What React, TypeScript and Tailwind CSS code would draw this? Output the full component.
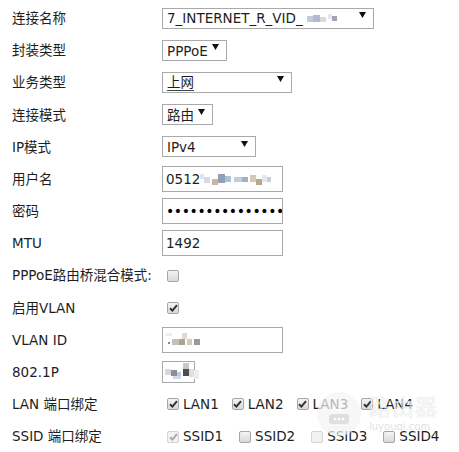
import React from 'react';

// Router WAN connection settings form (static snapshot)

const FONT = "font-['DejaVu_Sans','Noto_Sans_CJK_SC',sans-serif]";

const Arrow = () => (
  <svg width="7" height="6" viewBox="0 0 7 6" className="shrink-0 -mt-[6px]">
    <path d="M0 0 L7 0 L3.5 6 Z" fill="#111" />
  </svg>
);

interface SelectProps {
  width: string;
  children: React.ReactNode;
}

const FakeSelect: React.FC<SelectProps> = ({ width, children }) => (
  <div className={`${width} h-[21px] border border-[#a9a9a9] bg-white flex items-center justify-between pl-[4px] pr-[7px] overflow-hidden`}>
    <div className="flex items-center whitespace-nowrap pt-[2px] leading-none">{children}</div>
    <Arrow />
  </div>
);

const TextBox: React.FC<{ width?: string; height?: string; children?: React.ReactNode }> = ({ width = 'w-[121px]', height = 'h-[26px]', children }) => (
  <div className={`${width} ${height} border border-[#a9a9a9] bg-white flex items-center pl-[3px] overflow-hidden whitespace-nowrap`}>
    {children}
  </div>
);

// censored area: small pixel blocks
const Pixels: React.FC<{ w: number; h: number; cells: [number, number, number, number, string][] }> = ({ w, h, cells }) => (
  <svg width={w} height={h} viewBox={`0 0 ${w} ${h}`} className="shrink-0">
    {cells.map(([x, y, cw, ch, c], i) => (
      <rect key={i} x={x} y={y} width={cw} height={ch} fill={c} />
    ))}
  </svg>
);

const Check: React.FC<{ checked?: boolean; disabled?: boolean }> = ({ checked, disabled }) => (
  <div
    className={`w-[12px] h-[12px] ml-[5px] shrink-0 rounded-[2px] border flex items-center justify-center ${
      disabled ? 'border-[#d4d4d4] bg-[#f2f2f2]' : 'border-[#a6a6a6] bg-gradient-to-b from-[#f4f4f4] to-[#d9d9d9]'
    }`}
  >
    {checked && (
      <svg width="9" height="8" viewBox="0 0 9 8">
        <path d="M1 4.2 L3.4 6.6 L8 1.2" fill="none" stroke={disabled ? '#a8a8a8' : '#333'} strokeWidth="2" />
      </svg>
    )}
  </div>
);

const Row: React.FC<{ label: string; children: React.ReactNode }> = ({ label, children }) => (
  <div className="h-[32.2px] flex items-center">
    <div className="w-[150px] shrink-0 whitespace-nowrap">{label}</div>
    <div className="flex items-center">{children}</div>
  </div>
);

const Opt: React.FC<{ checked?: boolean; disabled?: boolean; label: string; gap: string }> = ({ checked, disabled, label, gap }) => (
  <div className={`flex items-center ${gap}`}>
    <Check checked={checked} disabled={disabled} />
    <span className="ml-[4px]">{label}</span>
  </div>
);

export default function App() {
  return (
    <div className={`relative w-[459px] h-[452px] overflow-hidden bg-white text-[#1e1e1e] text-[13.5px] pl-[12px] pt-[2px] ${FONT}`}>
      <Row label="连接名称">
        <FakeSelect width="w-[212px]">
          <span>7_INTERNET_R_VID_</span>
          <Pixels w={34} h={12} cells={[[4, 3, 6, 6, '#c6c9d8'], [10, 2, 7, 7, '#b3b8cc'], [17, 4, 6, 5, '#d8dae4'], [25, 1, 4, 5, '#e6e6ee'], [29, 3, 5, 5, '#9ea3b6']]} />
        </FakeSelect>
      </Row>
      <Row label="封装类型">
        <FakeSelect width="w-[65px]">PPPoE</FakeSelect>
      </Row>
      <Row label="业务类型">
        <FakeSelect width="w-[130px]">
          <span className="border-b border-[#444] leading-[15px]">上网</span>
        </FakeSelect>
      </Row>
      <Row label="连接模式">
        <FakeSelect width="w-[51px]">路由</FakeSelect>
      </Row>
      <Row label="IP模式">
        <FakeSelect width="w-[94px]">IPv4</FakeSelect>
      </Row>
      <Row label="用户名">
        <TextBox>
          <span>0512</span>
          <Pixels w={75} h={16} cells={[[0, 3, 4, 5, '#e0e4ec'], [4, 6, 6, 6, '#d5dbe6'], [12, 8, 6, 6, '#c8b8a2'], [18, 3, 7, 9, '#8fa0b8'], [25, 5, 6, 6, '#b2c0d4'], [34, 6, 8, 5, '#c0cce0'], [42, 6, 6, 5, '#9fb0c8'], [50, 4, 6, 7, '#d8c8b0'], [56, 8, 6, 6, '#b8a890'], [62, 4, 5, 7, '#e4e8f0'], [67, 6, 4, 5, '#c9ced8']]} />
        </TextBox>
      </Row>
      <Row label="密码">
        <TextBox>
          <span className="tracking-[-0.4px] text-[14px] leading-none text-black">••••••••••••••••••</span>
        </TextBox>
      </Row>
      <Row label="MTU">
        <TextBox>
          <span>1492</span>
        </TextBox>
      </Row>
      <Row label="PPPoE路由桥混合模式:">
        <Check />
      </Row>
      <Row label="启用VLAN">
        <Check checked />
      </Row>
      <Row label="VLAN ID">
        <TextBox>
          <Pixels w={40} h={16} cells={[[2, 10, 2, 2, '#8a8a8a'], [6, 7, 7, 6, '#c5c0b6'], [13, 7, 6, 6, '#a8a49c'], [16, 1, 5, 6, '#e2d8cc'], [21, 7, 5, 6, '#d6cabc'], [28, 7, 6, 6, '#9a9a9a'], [0, 1, 6, 3, '#eeeeee']]} />
        </TextBox>
      </Row>
      <Row label="802.1P">
        <div className="relative">
          <TextBox width="w-[33px]" height="h-[22px]">
            <span />
          </TextBox>
          <div className="absolute left-[1px] top-[1px]">
            <Pixels w={38} h={20} cells={[[2, 7, 6, 6, '#d8d8dc'], [8, 8, 6, 6, '#8e8e92'], [14, 10, 4, 5, '#c4cad8'], [20, 1, 6, 7, '#c8c8c8'], [20, 7, 6, 7, '#4e4e4e'], [26, 7, 5, 8, '#e0e0e0'], [31, 8, 5, 9, '#ededed'], [10, 14, 8, 3, '#cfdcef']]} />
          </div>
        </div>
      </Row>
      <Row label="LAN 端口绑定">
        <Opt checked label="LAN1" gap="mr-[8px]" />
        <Opt checked label="LAN2" gap="mr-[8px]" />
        <Opt checked label="LAN3" gap="mr-[8px]" />
        <Opt checked label="LAN4" gap="" />
      </Row>
      <Row label="SSID 端口绑定">
        <Opt checked disabled label="SSID1" gap="mr-[11px]" />
        <Opt label="SSID2" gap="mr-[11px]" />
        <Opt disabled label="SSID3" gap="mr-[11px]" />
        <Opt label="SSID4" gap="" />
      </Row>

      {/* watermark */}
      <div className="absolute left-[317px] top-[392px] flex items-center opacity-70 pointer-events-none">
        <div className="w-[44px] h-[44px] rounded-full bg-[#f4f4f4] flex items-center justify-center">
          <svg width="26" height="22" viewBox="0 0 26 22">
            <path d="M7 6 A8 8 0 0 1 19 6" fill="none" stroke="#fff" strokeWidth="2" />
            <path d="M10 8 A4 4 0 0 1 16 8" fill="none" stroke="#fff" strokeWidth="2" />
            <rect x="3" y="11" width="20" height="10" rx="3" fill="#d2d2d2" />
            <circle cx="9" cy="16" r="1.3" fill="#fff" />
            <circle cx="13" cy="16" r="1.3" fill="#fff" />
            <circle cx="17" cy="16" r="1.3" fill="#fff" />
          </svg>
        </div>
        <div className="ml-[8px] flex flex-col leading-none">
          <span className="text-[22px] text-[#f6f6f6] [text-shadow:0_0_1px_#bbb] tracking-[1px]">路由器</span>
          <span className="text-[10px] text-[#d6d6d6] mt-[3px]">luyouqi.com</span>
        </div>
      </div>
    </div>
  );
}
